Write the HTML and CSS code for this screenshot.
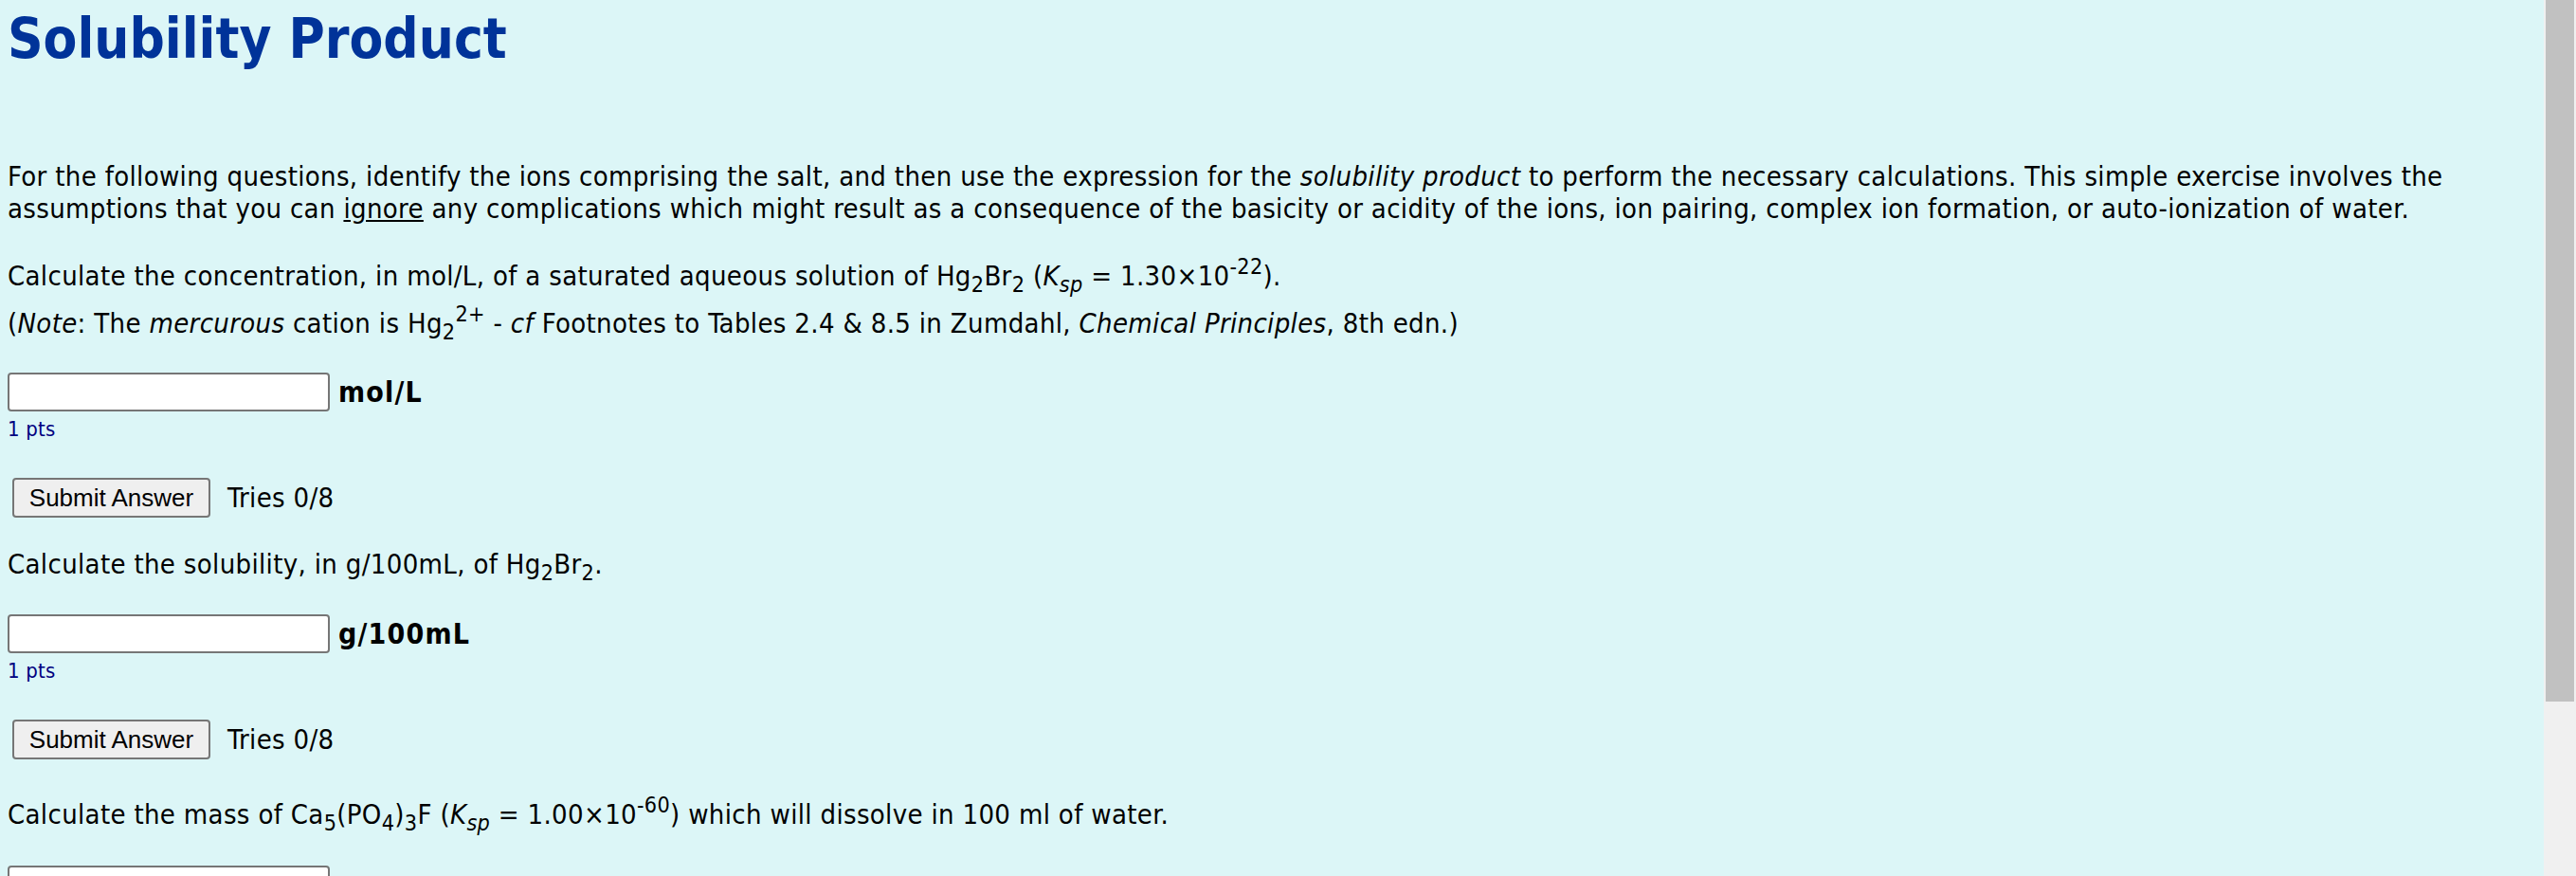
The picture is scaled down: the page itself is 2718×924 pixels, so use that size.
FILE: index.html
```html
<!DOCTYPE html>
<html lang="en">
<head>
<meta charset="utf-8">
<title>Solubility Product</title>
<link rel="stylesheet" href="styles.css">
</head>
<body>
<div class="page">
  <h1 class="title">Solubility Product</h1>
  <p class="intro">For the following questions, identify the ions comprising the salt, and then use the expression for the <i>solubility product</i> to perform the necessary calculations. This simple exercise involves the assumptions that you can <u>ignore</u> any complications which might result as a consequence of the basicity or acidity of the ions, ion pairing, complex ion formation, or auto-ionization of water.</p>

  <div class="question question--first">
    <p class="q-text">Calculate the concentration, in mol/L, of a saturated aqueous solution of Hg<sub>2</sub>Br<sub>2</sub> (<i>K</i><sub><i>sp</i></sub> = 1.30×10<sup>-22</sup>).</p>
    <p class="q-note">(<i>Note</i>: The <i>mercurous</i> cation is Hg<sub>2</sub><sup>2+</sup> - <i>cf</i> Footnotes to Tables 2.4 &amp; 8.5 in Zumdahl, <i>Chemical Principles</i>, 8th edn.)</p>
    <div class="answer-row answer-row--after-note"><input class="answer" type="text"><span class="unit">mol/L</span></div>
    <div class="pts">1 pts</div>
    <div class="submit-row"><button class="submit" type="button">Submit Answer</button><span class="tries">Tries 0/8</span></div>
  </div>

  <div class="question">
    <p class="q-text">Calculate the solubility, in g/100mL, of Hg<sub>2</sub>Br<sub>2</sub>.</p>
    <div class="answer-row"><input class="answer" type="text"><span class="unit">g/100mL</span></div>
    <div class="pts">1 pts</div>
    <div class="submit-row"><button class="submit" type="button">Submit Answer</button><span class="tries">Tries 0/8</span></div>
  </div>

  <div class="question question--tall">
    <p class="q-text">Calculate the mass of Ca<sub>5</sub>(PO<sub>4</sub>)<sub>3</sub>F (<i>K</i><sub><i>sp</i></sub> = 1.00×10<sup>-60</sup>) which will dissolve in 100 ml of water.</p>
    <div class="answer-row answer-row--tall"><input class="answer" type="text"><span class="unit">g</span></div>
  </div>
</div>
<div class="scrollbar"><div class="scrollbar-thumb"></div></div>
</body>
</html>
```

FILE: styles.css
```css
html, body {
  margin: 0;
  padding: 0;
}

body {
  background: #dcf6f7;
  color: #000;
  font-family: "DejaVu Sans Condensed", "DejaVu Sans", sans-serif;
  font-stretch: condensed;
  font-size: 29px;
  letter-spacing: 0.33px;
  line-height: 34px;
  overflow: hidden;
}

.page {
  width: 2668px;
  padding: 0 8px;
}

.title {
  margin: 6px 0 0;
  font-size: 58px;
  line-height: 70px;
  font-weight: bold;
  letter-spacing: 0;
  color: #003399;
}

.intro {
  margin: 93px 0 0;
}

.q-text {
  margin: 32px 0 0;
}

.question--first .q-text {
  margin-top: 37px;
}

.question--tall .q-text {
  margin-top: 41px;
}

.q-note {
  margin: 16px 0 0;
}

sub, sup {
  font-size: 0.8em;
  line-height: 0;
  position: relative;
  vertical-align: baseline;
}

sub {
  top: 0.32em;
}

sup {
  top: -0.5em;
}

.answer-row {
  display: flex;
  align-items: center;
  gap: 9px;
  margin-top: 36px;
}

.answer-row--after-note {
  margin-top: 35px;
}

.answer-row--tall {
  margin-top: 37px;
}

.answer {
  box-sizing: border-box;
  width: 340px;
  height: 41px;
  margin: 0;
  border: 2px solid #767676;
  border-radius: 4px;
  background: #fff;
  padding: 2px 4px;
  font: inherit;
}

.unit {
  font-weight: bold;
  font-stretch: normal;
  font-size: 30px;
  letter-spacing: 1.2px;
}

.pts {
  margin-top: 5px;
  font-size: 22px;
  letter-spacing: 0.2px;
  line-height: 27px;
  color: #000080;
}

.submit-row {
  display: flex;
  align-items: center;
  gap: 18px;
  margin-top: 38px;
  padding-left: 5px;
}

.submit {
  box-sizing: border-box;
  height: 42px;
  width: 209px;
  margin: 0;
  padding: 0 12px;
  border: 2px solid #767676;
  border-radius: 4px;
  background: #efefef;
  color: #000;
  font-family: "Liberation Sans", Arial, sans-serif;
  font-stretch: normal;
  font-size: 26px;
  letter-spacing: 0;
}

.scrollbar {
  position: fixed;
  top: 0;
  right: 0;
  width: 34px;
  height: 100%;
  background: #f0f0f0;
}

.scrollbar-thumb {
  margin-left: 2px;
  width: 30px;
  height: 740px;
  background: #c1c1c1;
}
```
